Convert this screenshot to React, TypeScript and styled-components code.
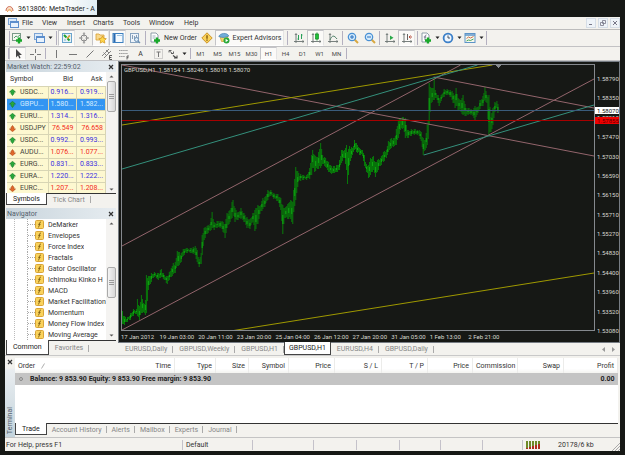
import React from 'react';
import styled, { createGlobalStyle, css } from 'styled-components';

const GlobalStyle = createGlobalStyle`
  * { box-sizing: border-box; }
  body { margin: 0; background: #161815; }
  button { font: inherit; color: inherit; margin: 0; padding: 0; border: 0; background: none; }
  table { border-collapse: collapse; border-spacing: 0; }
  svg { display: block; flex: none; }
`;

const Desktop = styled.div`
  min-height: 100vh;
  padding-bottom: 5px;
  background: #161815;
  color: #333;
  font: 7px/10px Roboto, 'Liberation Sans', sans-serif;
`;

const TitleBar = styled.header`
  display: flex;
  align-items: center;
  gap: 4px;
  width: 97px;
  height: 15px;
  padding: 2px 0 0 5px;
  background: linear-gradient(90deg, #ffffff 60%, #e2eef2);
  color: #222;
  white-space: nowrap;
  overflow: hidden;
`;

const AppWindow = styled.main`
  display: flex;
  flex-direction: column;
  margin: 2px 5px 0;
  background: #f3f2ee;
`;

const MenuBar = styled.nav`
  display: flex;
  align-items: center;
  height: 13px;
  padding-left: 2px;
  border-bottom: 1px solid #bcbcbc;
`;

const MenuItem = styled.button<{ $w: number }>`
  width: ${(p) => p.$w}px;
  text-align: left;
`;

const WindowButtons = styled.div`
  display: flex;
  gap: 2px;
  margin-left: auto;
`;

const WindowButton = styled.button`
  display: grid;
  place-items: center;
  width: 10px;
  height: 10px;
  border: 1px solid #d5dde6;
  background: #eef3f8;
`;

const ToolRow = styled.div<{ $h: number }>`
  display: flex;
  align-items: stretch;
  height: ${(p) => p.$h}px;
  padding-left: 3px;
  border-bottom: 1px solid #c2c2c4;
`;

const ToolButton = styled.button<{ $on?: boolean; $w?: number }>`
  display: flex;
  align-items: center;
  justify-content: center;
  gap: 3px;
  width: ${(p) => p.$w || 17}px;
  white-space: nowrap;
  ${(p) =>
    p.$on &&
    css`
      border: 1px solid #c4c4c8;
      border-bottom-color: #fff;
      border-right-color: #e4e4e4;
      background: #fbfaf8;
    `}
`;

const PeriodButton = styled(ToolButton)`
  font-size: 6px;
  color: #4a4a4a;
`;

const Separator = styled.span<{ $w: number }>`
  width: ${(p) => p.$w}px;
  margin: 1px 0;
  background: linear-gradient(#b4b0c0, #b4b0c0) center / 1px 100% no-repeat;
`;

const Workspace = styled.section`
  display: grid;
  grid-template-columns: 113px minmax(0, 1fr);
  border-bottom: 1px solid #c9c9c9;
`;

const SideColumn = styled.div`
  display: flex;
  flex-direction: column;
  gap: 3px;
  padding: 0 2px 0 1px;
`;

const Panel = styled.section`
  display: flex;
  flex-direction: column;
`;

const PanelHeader = styled.div`
  display: flex;
  align-items: center;
  justify-content: space-between;
  height: 11px;
  padding: 0 1px;
  background: linear-gradient(90deg, #c9d5dd, #e6ecf0);
  color: #54606c;
`;

const CloseButton = styled.button`
  display: grid;
  place-items: center;
  width: 8px;
  height: 8px;
`;

const PanelBody = styled.div<{ $h: number }>`
  display: grid;
  grid-template-columns: minmax(0, 1fr) 10px;
  height: ${(p) => p.$h}px;
  padding-left: 1px;
  border-bottom: 1px solid #333;
  background: #fff;
  overflow: hidden;
`;

const ScrollTrack = styled.div`
  display: flex;
  flex-direction: column;
  align-items: center;
  background: #f4f3f1;
`;

const ScrollSpace = styled.div<{ $grow: number }>`
  flex: ${(p) => p.$grow} 1 0;
`;

const ScrollThumb = styled.div`
  display: grid;
  place-items: center;
  width: 9px;
  height: 31px;
  border: 1px solid #aaa;
  border-radius: 2px;
  background: linear-gradient(90deg, #f4f4f4, #d8d8d8);
`;

const QuoteTable = styled.table`
  width: 100%;
  table-layout: fixed;

  col:nth-child(1) { width: 41px; }
  col:nth-child(2) { width: 28px; }
  th {
    height: 14px;
    padding: 0 3px;
    font-weight: 400;
    text-align: right;
    background: #fff;
  }
  th:first-child { text-align: left; }
  td {
    height: 12px;
    padding: 0 2px;
    text-align: right;
    white-space: nowrap;
    border-top: 1px solid #d8d5b4;
    border-right: 1px solid #d8d5b4;
  }
  td:first-child { text-align: left; }
`;

const QuoteRow = styled.tr<{ $down: boolean; $selected: boolean }>`
  background: ${(p) => (p.$selected ? '#3395f2' : '#fdf8d0')};
  color: ${(p) => (p.$selected ? '#d4ecff' : p.$down ? '#f22c22' : '#3a30e0')};
  td:first-child { color: ${(p) => (p.$selected ? '#d4ecff' : '#44443a')}; }
`;

const SymbolCell = styled.span`
  display: flex;
  align-items: center;
  gap: 4px;
`;

const TabStrip = styled.div<{ $h: number }>`
  display: flex;
  align-items: stretch;
  height: ${(p) => p.$h}px;
`;

const Tab = styled.button<{ $on?: boolean; $pad: number }>`
  padding: 0 ${(p) => p.$pad}px;
  color: #868686;
  white-space: nowrap;
  background: linear-gradient(#aaa, #aaa) right center / 1px 7px no-repeat;
  ${(p) =>
    p.$on &&
    css`
      margin-top: -1px;
      border: 1px solid #444;
      border-top: 0;
      background: #fff;
      color: #222;
    `}
`;

const Tree = styled.ul`
  margin: 0 0 0 7px;
  padding: 0 0 0 12px;
  list-style: none;
  border-left: 1px dotted #bbb;
  overflow: hidden;
`;

const TreeItem = styled.li`
  display: flex;
  align-items: center;
  gap: 4px;
  height: 11px;
  white-space: nowrap;
  border-left: 1px dotted #aaa;

  &::before {
    content: '';
    flex: none;
    width: 7px;
    margin-right: -4px;
    border-top: 1px dotted #aaa;
  }
`;

const TreeLabel = styled.span`
  overflow: hidden;
`;

const ChartColumn = styled.section`
  display: flex;
  flex-direction: column;
`;

const ChartFrame = styled.div`
  display: grid;
  grid-template-columns: minmax(0, 1fr) 24px;
  grid-template-rows: minmax(0, 1fr) 11px;
  flex: 1;
  padding: 2px 0 0 2px;
  border: 1px solid #777d84;
  background: #161815;
  color: #d8d8d0;
  font-size: 6px;
  line-height: 8px;
`;

const Plot = styled.div`
  position: relative;
  height: 267px;
  border: 1px solid #85898e;
  svg { width: 100%; height: 100%; }
`;

const PlotTitle = styled.div`
  position: absolute;
  left: 2px;
  top: 1px;
  white-space: pre;
`;

const PriceAxis = styled.div`
  position: relative;
  display: flex;
  flex-direction: column;
  justify-content: space-between;
  padding: 11px 0 0 2px;
  margin-bottom: -4px;
`;

const PriceTag = styled.span<{ $top: number; $alert?: boolean }>`
  position: absolute;
  left: 0;
  right: 0;
  top: ${(p) => p.$top}px;
  height: 7px;
  padding-left: 2px;
  line-height: 7px;
  background: ${(p) => (p.$alert ? '#f00000' : '#ffffff')};
  color: ${(p) => (p.$alert ? '#5a0000' : '#111')};
`;

const TimeAxis = styled.div`
  display: flex;
  padding-top: 2px;
  white-space: nowrap;
  grid-column: 1 / -1;
`;

const TimeLabel = styled.span`
  flex: 0 0 7.75%;
`;

const ChartTabs = styled(TabStrip)`
  padding-left: 1px;
`;

const TabArrows = styled.div`
  display: flex;
  align-items: center;
  gap: 7px;
  margin-left: auto;
  padding-right: 5px;
`;

const Terminal = styled.section`
  display: grid;
  grid-template-columns: 10px minmax(0, 1fr);
  margin-top: 2px;
  border-bottom: 1px solid #c4c4c4;
`;

const TerminalSide = styled.div`
  display: flex;
  flex-direction: column;
  align-items: center;
  justify-content: space-between;
  padding-bottom: 3px;
  background: linear-gradient(#f3f2ee 10px, #e9edf0 12px, #c4d4dc);
  color: #54606c;
`;

const VerticalLabel = styled.span`
  writing-mode: vertical-rl;
  transform: rotate(180deg);
  line-height: 9px;
`;

const TerminalMain = styled.div`
  display: flex;
  flex-direction: column;
  padding: 0 2px 2px 0;
`;

const OrdersArea = styled.div`
  height: 66px;
  background: #fff;
  border-bottom: 1px solid #333;
`;

const OrdersTable = styled.table`
  width: 100%;
  table-layout: fixed;
  th {
    height: 15px;
    padding: 0 3px;
    font-weight: 400;
    text-align: right;
    background: linear-gradient(#fff 70%, #f3f3f0);
    border-right: 1px solid #ececea;
  }
  th:first-child { text-align: left; border-right: 0; }
  td {
    height: 12px;
    padding: 0 3px;
    background: #c4c4c4;
    color: #1c1c1c;
    font-weight: 700;
  }
  td:last-child { text-align: right; }
`;

const OrderHeading = styled.span`
  display: flex;
  align-items: center;
  gap: 6px;
`;

const BalanceText = styled.span`
  display: flex;
  align-items: center;
  gap: 6px;
  white-space: nowrap;
`;

const BalanceParts = styled.span`
  display: flex;
  gap: 2px;
`;

const StatusBar = styled.footer`
  display: flex;
  align-items: center;
  height: 13px;
`;

const StatusCell = styled.span<{ $w?: number }>`
  display: flex;
  align-items: center;
  ${(p) => (p.$w ? `width: ${p.$w}px;` : 'flex: 1;')}
  height: 10px;
  padding-left: 3px;
  border-left: 1px solid #c4c2ca;
  white-space: nowrap;
  &:first-child { border-left: 0; padding-left: 1px; }
`;

const StatusText = styled(StatusCell)`
  border-left: 0;
`;

const Grip = styled.svg`
  align-self: flex-end;
`;

/* ---------- icons ---------- */

const Svg = ({ w = 12, h = 12, children }: { w?: number; h?: number; children: React.ReactNode }) => (
  <svg width={w} height={h} viewBox={`0 0 ${w} ${h}`} fill="none" aria-hidden="true">
    {children}
  </svg>
);

const plus = <path d="M8 5.5v6M5 8.5h6" stroke="#18a82a" strokeWidth="2.4" />;
const axes = <path d="M3 2v9M1 9.5h10M2 3l1-1.5 1 1.5M9.5 8.5l1.5 1-1.5 1" stroke="#6a7370" strokeWidth=".9" />;

const icons: Record<string, React.ReactNode> = {
  newChart: (
    <>
      <rect x="1.5" y="1.5" width="8" height="7" fill="#f4f8f0" stroke="#7a9a88" />
      <path d="M3 6l2-2 1.5 1L9 3" stroke="#58a070" />
      {plus}
    </>
  ),
  profiles: (
    <>
      <rect x="1.5" y="1.5" width="8" height="6" fill="#dcebfa" stroke="#7ca4d4" />
      <rect x="3.5" y="4.5" width="8" height="6" fill="#e8f2fc" stroke="#5c8ecc" />
      <path d="M3.5 5.5h8" stroke="#5c8ecc" />
    </>
  ),
  market: (
    <>
      <rect x="1.5" y="1.5" width="9" height="9" fill="#e6f3fa" stroke="#6aa4cc" />
      <path d="M7 4h2M3 8h2" stroke="#88b0cc" />
      <path d="M3 3l2.500 2.500M8.500 8.500L6.500 6.500" stroke="#20a030" strokeWidth="2" />
      <path d="M6 6.500l3-3" stroke="#e0a030" strokeWidth="1.600" />
    </>
  ),
  target: (
    <>
      <circle cx="6" cy="6" r="3" stroke="#888" />
      <path d="M6 1v3.500M6 7.500V11M1 6h3.500M7.500 6H11" stroke="#888" />
      <path d="M5 2l1-1.500L7 2M5 10l1 1.500L7 10" stroke="#999" strokeWidth=".8" />
    </>
  ),
  star: (
    <>
      <path d="M1 2h3l1 1h4v5H1z" fill="#f8d88c" stroke="#d8a030" strokeWidth=".8" />
      <path d="M7.500 4l1.200 2.300 2.600.4-1.900 1.800.5 2.600-2.400-1.200-2.300 1.200.4-2.600L3.800 6.700l2.500-.4z" fill="#ffd84c" stroke="#d09018" strokeWidth=".7" />
    </>
  ),
  terminal: (
    <>
      <rect x="1" y="1.5" width="10" height="9" fill="#f4faff" stroke="#3c80c0" />
      <path d="M2.500 2v8" stroke="#2868b0" strokeWidth="2" />
      <path d="M5 3.500h5" stroke="#9cc4e4" />
    </>
  ),
  tester: (
    <>
      <rect x="1.5" y="1.5" width="8" height="9" fill="#eef4fa" stroke="#88a4c0" />
      <path d="M3.500 3v4M5.500 4v4M7.500 3v3" stroke="#88a0b8" />
      <circle cx="7.5" cy="7.5" r="2" fill="#dcecf8" stroke="#6c90b4" />
      <path d="M9 9l2 2" stroke="#6c90b4" strokeWidth="1.300" />
    </>
  ),
  order: (
    <>
      <path d="M2 1h5l2 2v7H2z" fill="#fff" stroke="#8494a0" strokeWidth=".9" />
      <path d="M3.500 4h3M3.500 6h3" stroke="#88a0b0" strokeWidth=".8" />
      {plus}
    </>
  ),
  warn: (
    <>
      <path d="M6 .8L11.200 6 6 11.200.8 6z" fill="#fad25a" stroke="#c88c1c" strokeWidth=".9" />
      <path d="M6 3.200v3.500M6 7.600v1.200" stroke="#7a5008" strokeWidth="1.300" />
    </>
  ),
  expert: (
    <>
      <path d="M2 4.500h8L8.500 9.500h-5z" fill="#f4d468" stroke="#c89c30" strokeWidth=".7" />
      <path d="M.8 4.500C2 1 9 0 10.800 4c-2 1.500-7 2-10 .5z" fill="#70acd8" stroke="#4080b0" strokeWidth=".7" />
      <circle cx="8.5" cy="8.5" r="3" fill="#28a838" />
      <path d="M7.600 6.800v3.400l2.600-1.700z" fill="#fff" />
    </>
  ),
  bars: (
    <>
      {axes}
      <path d="M5.500 3v5M8.500 2v5M4.500 7h1M8.500 3h1" stroke="#28a058" />
    </>
  ),
  candle: (
    <>
      {axes}
      <path d="M7 .5v8" stroke="#148c28" />
      <rect x="5.5" y="2" width="3" height="5" fill="#20c038" stroke="#148c28" strokeWidth=".7" />
    </>
  ),
  line: (
    <>
      {axes}
      <path d="M3 8c2-5 4-5 7-1" stroke="#508068" />
    </>
  ),
  zoomIn: (
    <>
      <path d="M7.500 7.500l3.500 3.500" stroke="#d8a840" strokeWidth="2" />
      <circle cx="5" cy="5" r="3.7" fill="#d4eafa" stroke="#4890d4" strokeWidth="1.200" />
      <path d="M5 3v4M3 5h4" stroke="#2870c0" />
    </>
  ),
  zoomOut: (
    <>
      <path d="M7.500 7.500l3.500 3.500" stroke="#d8a840" strokeWidth="2" />
      <circle cx="5" cy="5" r="3.7" fill="#d4eafa" stroke="#4890d4" strokeWidth="1.200" />
      <path d="M3 5h4" stroke="#2870c0" />
    </>
  ),
  scroll: (
    <>
      {axes}
      <path d="M6 3.500v4.500l3.500-2.200z" fill="#28a848" />
    </>
  ),
  shift: (
    <>
      {axes}
      <path d="M6.500 2v6" stroke="#666" />
      <path d="M11 5H8M9.500 3.500L8 5l1.500 1.500" stroke="#b85040" />
    </>
  ),
  indicator: (
    <>
      <path d="M2 1h5l2 2v7H2z" fill="#fff" stroke="#8494a0" strokeWidth=".9" />
      <path d="M6.500 3C5 3 5 4 5 8M3.800 5h2.400" stroke="#557" strokeWidth=".8" />
      {plus}
    </>
  ),
  clock: (
    <>
      <circle cx="6" cy="6" r="4.4" fill="#eef6fe" stroke="#3c80c8" strokeWidth="1.800" />
      <path d="M6 3.500V6h2" stroke="#345" strokeWidth=".9" />
    </>
  ),
  template: (
    <>
      <rect x="1" y="1.5" width="10" height="9" fill="#f6f8ee" stroke="#5c94c8" />
      <path d="M1 3h10" stroke="#5c94c8" strokeWidth="1.500" />
      <path d="M2.500 6.500l2-1.500 2 1L9.500 4.500" stroke="#c86840" strokeWidth=".9" />
      <path d="M2.500 9l2-1 2 .5 3-1.500" stroke="#38a050" strokeWidth=".9" />
    </>
  ),
  cursor: <path d="M4 1v8.500l2-2 1.300 3 1.300-.6L7.300 7H10z" fill="#444" />,
  cross: <path d="M6.500 1v4M6.500 8v4M1 6.500h4M8 6.500h4" stroke="#777" />,
  vline: <path d="M6.500 2v8" stroke="#777" />,
  hline: <path d="M2 6.500h8" stroke="#777" />,
  trend: <path d="M2.500 9.500l7-7" stroke="#777" />,
  channel: (
    <>
      <path d="M1 8l7-7M3 10l7-7M2.500 4.500l3 3M5 2l3 3" stroke="#777" strokeWidth=".9" />
      <path d="M11 7.500H8.500v4H11M8.500 9.500h2" stroke="#333" strokeWidth=".8" />
    </>
  ),
  fibo: (
    <>
      <path d="M1 2.500h9M1 5.500h9M1 8.500h6" stroke="#999" strokeDasharray="1.500 .6" />
      <path d="M11 8H9v3.500M9 9.700h1.500" stroke="#444" strokeWidth=".8" />
    </>
  ),
  textLabel: (
    <>
      <rect x="2.5" y="1.5" width="8" height="9" stroke="#aaa" strokeDasharray="1 1" />
      <path d="M4.500 4h4M6.500 4v5" stroke="#777" />
    </>
  ),
  arrows: (
    <>
      <path d="M2 4.500V2.500h2.500M2.500 3l3.500 3M4 5.500h2.500V3.500" stroke="#555" strokeWidth=".9" />
      <path d="M6 7.500l3.500 2.500M10 7.500V10H7" stroke="#444" strokeWidth="1.100" />
    </>
  ),
};

const Icon = ({ name }: { name: string }) => <Svg>{icons[name]}</Svg>;

const DownCaret = () => (
  <Svg w={5} h={4}>
    <path d="M.5.5h4L2.500 3z" fill="#222" />
  </Svg>
);

const Cross = () => (
  <Svg w={6} h={6}>
    <path d="M1 1l4 4M5 1L1 5" stroke="#333" strokeWidth="1.200" />
  </Svg>
);

const ScrollArrow = ({ up }: { up?: boolean }) => (
  <Svg w={9} h={9}>
    <path d={up ? 'M2.500 5.500h4l-2-2z' : 'M2.500 3.500h4l-2 2z'} fill="#555" />
  </Svg>
);

const Direction = ({ down }: { down: boolean }) => (
  <Svg w={7} h={7}>
    <path
      d={down
        ? 'M3.5 6.700L.5 4h1.500V2.500L3.500.5 5 2.500V4h1.500z'
        : 'M3.5.3L6.500 3H5v1.500L3.500 6.500 2 4.500V3H.5z'}
      fill={down ? '#e0682c' : '#28a83c'}
      stroke={down ? '#b04818' : '#187828'}
      strokeWidth=".6"
    />
  </Svg>
);

const FunctionIcon = () => (
  <Svg w={9} h={9}>
    <rect x=".5" y=".5" width="8" height="8" rx="1" fill="#f9d25c" stroke="#d8a438" />
    <path d="M6 2C4.600 2 4.600 3 4.300 5 4.100 6.700 4 7 3 7M3.200 4.300h2.400" stroke="#7a5a10" strokeWidth=".9" />
  </Svg>
);

/* ---------- chart data ---------- */

type Bar = [number, number, number];

/* x, high and low in window coordinates */
const swings: Bar[] = [
  [121, 311, 324], [123, 316, 325], [126, 317, 322], [129, 313, 320], [132, 309, 316], [135, 309, 314],
  [136, 299, 316], [138, 306, 320], [140, 295, 313], [142, 303, 312], [144, 300, 315], [145, 275, 313],
  [147, 276, 290], [150, 273, 282], [153, 272, 277], [157, 273, 280], [160, 269, 277], [163, 275, 280],
  [166, 276, 284], [168, 272, 280], [170, 268, 277], [172, 263, 274], [174, 262, 273], [176, 251, 266],
  [178, 252, 265], [180, 253, 262], [182, 249, 256], [185, 248, 253], [190, 248, 253], [194, 246, 255],
  [196, 250, 262], [198, 259, 267], [200, 253, 264], [201, 235, 255], [203, 228, 240], [206, 226, 234],
  [209, 224, 231], [211, 212, 228], [213, 222, 230], [217, 221, 227], [221, 221, 229], [224, 224, 238],
  [226, 213, 228], [229, 210, 222], [231, 202, 218], [232, 200, 212], [234, 208, 222], [237, 212, 220],
  [240, 208, 219], [243, 213, 222], [246, 217, 228], [249, 219, 229], [252, 213, 222], [254, 210, 231],
  [257, 205, 224], [259, 206, 214], [262, 198, 209], [264, 197, 207], [267, 190, 200], [270, 190, 196],
  [273, 193, 199], [277, 194, 201], [280, 198, 210], [282, 205, 234], [284, 208, 218], [287, 204, 219],
  [290, 200, 219], [292, 202, 224], [293, 190, 212], [295, 167, 200], [298, 173, 181], [302, 175, 180],
  [306, 175, 180], [309, 168, 179], [311, 155, 175], [312, 150, 168], [314, 155, 172], [317, 157, 169],
  [320, 143, 168], [322, 155, 164], [325, 158, 167], [328, 162, 172], [331, 166, 174], [334, 166, 173],
  [337, 165, 172], [339, 160, 170], [341, 150, 163], [344, 150, 158], [346, 145, 170], [347, 152, 184],
  [349, 146, 165], [352, 148, 155], [354, 140, 150], [356, 143, 152], [359, 148, 155], [362, 150, 156],
  [364, 155, 166], [366, 164, 172], [368, 165, 178], [370, 158, 175], [373, 156, 170], [375, 162, 177],
  [377, 160, 172], [380, 158, 166], [383, 152, 162], [386, 150, 158], [388, 141, 152], [391, 138, 148],
  [394, 138, 146], [396, 129, 145], [398, 120, 138], [400, 118, 130], [403, 117, 128], [405, 118, 138],
  [407, 130, 138], [411, 129, 136], [415, 129, 134], [419, 130, 136], [421, 132, 141], [423, 138, 155],
  [425, 140, 150], [427, 125, 145], [428, 120, 139], [429, 83, 125], [431, 88, 103], [433, 88, 100],
  [434, 77, 100], [435, 90, 98], [438, 95, 103], [439, 98, 106], [441, 95, 101], [444, 89, 97],
  [447, 89, 95], [450, 90, 97], [452, 91, 100], [455, 96, 108], [456, 88, 106], [458, 98, 110],
  [461, 100, 112], [463, 95, 115], [466, 108, 116], [469, 108, 114], [473, 110, 116], [475, 106, 120],
  [478, 107, 113], [480, 100, 109], [483, 96, 106], [485, 87, 100], [487, 95, 103], [489, 95, 136],
  [491, 117, 132], [493, 108, 125], [495, 102, 112], [497, 101, 108], [498, 104, 113],
];

const buildBars = (): Bar[] => {
  const out: Bar[] = [];
  for (let i = 0; i < swings.length - 1; i++) {
    const [x0, h0, l0] = swings[i];
    const [x1, h1, l1] = swings[i + 1];
    for (let x = x0; x < x1; x++) {
      const t = (x - x0) / (x1 - x0);
      const trim = x === x0 ? 0 : (x * 7) % 3;
      out.push([x, h0 + (h1 - h0) * t + trim, l0 + (l1 - l0) * t - ((x * 5) % 3) * (trim ? 1 : 0)]);
    }
  }
  out.push(swings[swings.length - 1]);
  return out;
};

const bars = buildBars();
const wicks = bars.map(([x, h, l]) => `M${x + 0.5} ${Math.round(h)}V${Math.round(l)}`).join('');
const bodies = bars
  .filter(([x]) => x % 3 === 0)
  .map(([x, h, l]) => `M${x + 0.5} ${Math.round(h + (l - h) * 0.35)}V${Math.round(h + (l - h) * 0.65)}`)
  .join('');

const trendLines: { d: string; color: string }[] = [
  { d: 'M121 65L595 156', color: '#94656c' },
  { d: 'M121 246L461 65', color: '#94656c' },
  { d: 'M121 330L595 79', color: '#94656c' },
  { d: 'M434 77L595 108', color: '#94656c' },
  { d: 'M121 125L493 65', color: '#a09a00' },
  { d: 'M230 331L595 273', color: '#a09a00' },
  { d: 'M121 169L478 65', color: '#34917c' },
  { d: 'M424 155L595 105', color: '#34917c' },
];

const PriceChart = () => (
  <svg
    viewBox="121 65 474 265"
    preserveAspectRatio="none"
    fill="none"
    shapeRendering="crispEdges"
    role="img"
    aria-label="GBPUSD hourly chart"
  >
    <path d={wicks} stroke="#087c0a" />
    <path d={bodies} stroke="#0ea812" />
    {trendLines.map((t) => (
      <path key={t.d} d={t.d} stroke={t.color} />
    ))}
    <path d="M121 110.500H595" stroke="#3a5c7c" />
    <path d="M121 120.500H595" stroke="#a80000" />
    <path d="M496 65h6l-3 3z" fill="#85898e" />
  </svg>
);

/* ---------- content ---------- */

const menus: [string, number][] = [
  ['File', 20], ['View', 25], ['Insert', 26], ['Charts', 30], ['Tools', 26], ['Window', 35], ['Help', 20],
];

const quotes: [string, string, string, boolean][] = [
  ['USDC...', '0.916...', '0.919...', false],
  ['GBPU...', '1.580...', '1.582...', false],
  ['EURU...', '1.314...', '1.316...', false],
  ['USDJPY', '76.549', '76.658', true],
  ['USDC...', '0.992...', '0.993...', false],
  ['AUDU...', '1.076...', '1.077...', true],
  ['EURG...', '0.831...', '0.833...', false],
  ['EURA...', '1.220...', '1.222...', false],
  ['EURC...', '1.207...', '1.208...', true],
];

const indicators = [
  'DeMarker', 'Envelopes', 'Force Index', 'Fractals', 'Gator Oscillator', 'Ichimoku Kinko H', 'MACD',
  'Market Facilitation', 'Momentum', 'Money Flow Index', 'Moving Average', '',
];

const prices = [
  '1.58790', '1.58350', '1.57910', '1.57470', '1.57030', '1.56590', '1.56150',
  '1.55710', '1.55270', '1.54830', '1.54400', '1.53960', '1.53520', '1.53080',
];

const times = [
  '17 Jan 2012', '19 Jan 03:00', '20 Jan 11:00', '23 Jan 20:00', '25 Jan 04:00',
  '26 Jan 12:00', '27 Jan 20:00', '31 Jan 05:00', '1 Feb 13:00', '2 Feb 21:00',
];

const chartTabs = ['EURUSD,Daily', 'GBPUSD,Weekly', 'GBPUSD,H1', 'GBPUSD,H1', 'EURUSD,H4', 'GBPUSD,Daily'];

const orderColumns: [string, number | undefined][] = [
  ['Order', undefined], ['Time', 60], ['Type', 41], ['Size', 33], ['Symbol', 40], ['Price', 46], ['S / L', 47],
  ['T / P', 46], ['Price', 45], ['Commission', 45], ['Swap', 46], ['Profit', 54],
];

const periods = ['M1', 'M5', 'M15', 'M30', 'H1', 'H4', 'D1', 'W1', 'MN'];

const Tool = ({ icon, on, menu }: { icon: string; on?: boolean; menu?: boolean }) => (
  <ToolButton $on={on} $w={menu ? 22 : 17} aria-label={icon} aria-pressed={!!on}>
    <Icon name={icon} />
    {menu && <DownCaret />}
  </ToolButton>
);

const Scrollbar = ({ before, after }: { before: number; after: number }) => (
  <ScrollTrack>
    <ScrollArrow up />
    <ScrollSpace $grow={before} />
    <ScrollThumb>
      <Svg w={5} h={7}>
        <path d="M0 1.500h5M0 3.500h5M0 5.500h5" stroke="#888" strokeWidth=".8" />
      </Svg>
    </ScrollThumb>
    <ScrollSpace $grow={after} />
    <ScrollArrow />
  </ScrollTrack>
);

const App = () => (
  <Desktop>
    <GlobalStyle />
    <TitleBar>
      <Svg w={9} h={8}>
        <path d="M1 6c0-6 7-6 7 0" fill="#f8dcc4" stroke="#d07058" />
        <path d="M2.500 7c0-3 4-3 4 0" stroke="#e8a050" />
      </Svg>
      3613806: MetaTrader - A
    </TitleBar>
    <AppWindow>
      <MenuBar>
        <MenuItem $w={15} aria-label="System menu">
          <Icon name="profiles" />
        </MenuItem>
        {menus.map(([label, w]) => (
          <MenuItem key={label} $w={w}>
            {label}
          </MenuItem>
        ))}
        <WindowButtons>
          <WindowButton aria-label="Minimize">
            <Svg w={6} h={6}><path d="M1 4.500h3" stroke="#778" /></Svg>
          </WindowButton>
          <WindowButton aria-label="Restore">
            <Svg w={6} h={6}><path d="M2.500.5h3v3h-3zM.5 2.500h3v3h-3z" stroke="#778" strokeWidth=".8" /></Svg>
          </WindowButton>
          <WindowButton aria-label="Close chart">
            <Svg w={6} h={6}><path d="M1 1l4 4M5 1L1 5" stroke="#778" /></Svg>
          </WindowButton>
        </WindowButtons>
      </MenuBar>

      <ToolRow $h={17}>
        <Separator $w={2} />
        <Tool icon="newChart" menu />
        <Tool icon="profiles" menu />
        <Separator $w={4} />
        <Tool icon="market" on />
        <Tool icon="target" />
        <Tool icon="star" on />
        <Tool icon="terminal" on />
        <Tool icon="tester" />
        <Separator $w={5} />
        <ToolButton $w={50}>
          <Icon name="order" />
          New Order
        </ToolButton>
        <Tool icon="warn" />
        <ToolButton $w={69} $on>
          <Icon name="expert" />
          Expert Advisors
        </ToolButton>
        <Separator $w={6} />
        <Tool icon="bars" />
        <Tool icon="candle" on />
        <Tool icon="line" />
        <Separator $w={3} />
        <Tool icon="zoomIn" />
        <Tool icon="zoomOut" />
        <Separator $w={3} />
        <Tool icon="scroll" />
        <Tool icon="shift" on />
        <Separator $w={4} />
        <Tool icon="indicator" menu />
        <Tool icon="clock" menu />
        <Tool icon="template" menu />
        <Separator $w={2} />
      </ToolRow>

      <ToolRow $h={14}>
        <Separator $w={1} />
        <Tool icon="cursor" on />
        <Tool icon="cross" />
        <Separator $w={4} />
        <Tool icon="vline" />
        <Tool icon="hline" />
        <Tool icon="trend" />
        <Tool icon="channel" />
        <Tool icon="fibo" />
        <ToolButton>A</ToolButton>
        <Tool icon="textLabel" />
        <Tool icon="arrows" menu />
        <Separator $w={4} />
        {periods.map((p) => (
          <PeriodButton key={p} $on={p === 'H1'}>
            {p}
          </PeriodButton>
        ))}
        <Separator $w={3} />
      </ToolRow>

      <Workspace>
        <SideColumn>
          <Panel>
            <PanelHeader>
              Market Watch: 22:59:02
              <CloseButton aria-label="Close Market Watch"><Cross /></CloseButton>
            </PanelHeader>
            <PanelBody $h={122}>
              <QuoteTable>
                <colgroup><col /><col /><col /></colgroup>
                <thead>
                  <tr><th>Symbol</th><th>Bid</th><th>Ask</th></tr>
                </thead>
                <tbody>
                  {quotes.map(([symbol, bid, ask, down], i) => (
                    <QuoteRow key={i} $down={down} $selected={i === 1}>
                      <td><SymbolCell><Direction down={down} />{symbol}</SymbolCell></td>
                      <td>{bid}</td>
                      <td>{ask}</td>
                    </QuoteRow>
                  ))}
                </tbody>
              </QuoteTable>
              <Scrollbar before={0} after={1} />
            </PanelBody>
            <TabStrip $h={11}>
              <Tab $on $pad={6}>Symbols</Tab>
              <Tab $pad={6}>Tick Chart</Tab>
            </TabStrip>
          </Panel>
          <Panel>
            <PanelHeader>
              Navigator
              <CloseButton aria-label="Close Navigator"><Cross /></CloseButton>
            </PanelHeader>
            <PanelBody $h={122}>
              <Tree>
                {indicators.map((name, i) => (
                  <TreeItem key={i}><FunctionIcon /><TreeLabel>{name}</TreeLabel></TreeItem>
                ))}
              </Tree>
              <Scrollbar before={40} after={33} />
            </PanelBody>
            <TabStrip $h={14}>
              <Tab $on $pad={6}>Common</Tab>
              <Tab $pad={6}>Favorites</Tab>
            </TabStrip>
          </Panel>
        </SideColumn>

        <ChartColumn>
          <ChartFrame>
            <Plot>
              <PriceChart />
              <PlotTitle>GBPUSD,H1  1.58154 1.58246 1.58018 1.58070</PlotTitle>
            </Plot>
            <PriceAxis>
              {prices.map((p) => <span key={p}>{p}</span>)}
              <PriceTag $top={53} $alert>1.57855</PriceTag>
              <PriceTag $top={43}>1.58070</PriceTag>
            </PriceAxis>
            <TimeAxis>
              {times.map((t) => <TimeLabel key={t}>{t}</TimeLabel>)}
            </TimeAxis>
          </ChartFrame>
          <ChartTabs $h={12}>
            {chartTabs.map((label, i) => (
              <Tab key={i} $on={i === 3} $pad={i === 3 ? 4 : 6}>{label}</Tab>
            ))}
            <TabArrows>
              <Svg w={3} h={5}><path d="M3 0v5L0 2.500z" fill="#999" /></Svg>
              <Svg w={3} h={5}><path d="M0 0v5l3-2.500z" fill="#999" /></Svg>
            </TabArrows>
          </ChartTabs>
        </ChartColumn>
      </Workspace>

      <Terminal>
        <TerminalSide>
          <CloseButton aria-label="Close Terminal"><Cross /></CloseButton>
          <VerticalLabel>Terminal</VerticalLabel>
        </TerminalSide>
        <TerminalMain>
          <OrdersArea>
            <OrdersTable>
              <colgroup>
                {orderColumns.map(([, w], i) => <col key={i} width={w} />)}
              </colgroup>
              <thead>
                <tr>
                  {orderColumns.map(([label], i) => (
                    <th key={i}>
                      {i === 0 ? (
                        <OrderHeading>
                          {label}
                          <Svg w={4} h={6}><path d="M.5 5.500l3-5" stroke="#999" strokeWidth=".8" /></Svg>
                        </OrderHeading>
                      ) : (
                        label
                      )}
                    </th>
                  ))}
                </tr>
              </thead>
              <tbody>
                <tr>
                  <td colSpan={11}>
                    <BalanceText>
                      <Svg w={6} h={6}><circle cx="3" cy="3" r="1.5" stroke="#888" /></Svg>
                      <BalanceParts>
                        <span>Balance: 9 853.90</span>
                        <span>Equity: 9 853.90</span>
                        <span>Free margin: 9 853.90</span>
                      </BalanceParts>
                    </BalanceText>
                  </td>
                  <td>0.00</td>
                </tr>
              </tbody>
            </OrdersTable>
          </OrdersArea>
          <TabStrip $h={11}>
            <Tab $on $pad={6}>Trade</Tab>
            {['Account History', 'Alerts', 'Mailbox', 'Experts', 'Journal'].map((label) => (
              <Tab key={label} $pad={5}>{label}</Tab>
            ))}
          </TabStrip>
        </TerminalMain>
      </Terminal>

      <StatusBar>
        <StatusCell>For Help, press F1</StatusCell>
        <StatusCell $w={70}>Default</StatusCell>
        <StatusCell $w={61} />
        <StatusCell $w={43} />
        <StatusCell $w={43} />
        <StatusCell $w={41} />
        <StatusCell $w={42} />
        <StatusCell $w={40} />
        <StatusCell $w={33}>
          <Svg w={14} h={8}>
            <path d="M1 0v8M4 0v7M7 0v6M10 0v5M13 0v4" stroke="#6e8a28" strokeWidth="2" />
            <path d="M1 7v1M4 6v2M7 5v3M10 4v4M13 3v5" stroke="#b02c20" strokeWidth="2" />
          </Svg>
        </StatusCell>
        <StatusText $w={57}>20178/6 kb</StatusText>
        <Grip width="8" height="8" viewBox="0 0 8 8" aria-hidden="true">
          <path d="M0 8l8-8M3 8l5-5M6 8l2-2" stroke="#aaa" />
        </Grip>
      </StatusBar>
    </AppWindow>
  </Desktop>
);

export default App;
